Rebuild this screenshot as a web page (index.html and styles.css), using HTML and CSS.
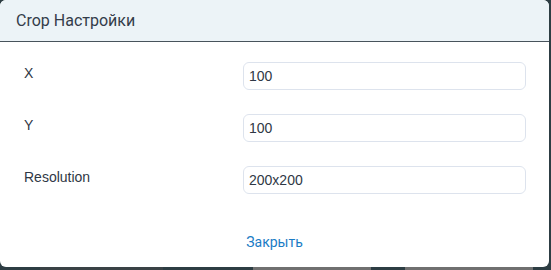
FILE: index.html
```html
<!DOCTYPE html>
<html lang="ru">

<head>
    <meta charset="UTF-8">
    <meta name="viewport" content="width=device-width, initial-scale=1.0">
    <title>Crop Настройки</title>
    <link rel="stylesheet" href="styles.css">
</head>

<body>
    <div class="modal">
        <div class="modal-header">Crop Настройки</div>
        <div class="modal-body">
            <div class="row">
                <label for="crop-x">X</label>
                <input id="crop-x" class="field" type="text" value="100">
            </div>
            <div class="row">
                <label for="crop-y">Y</label>
                <input id="crop-y" class="field" type="text" value="100">
            </div>
            <div class="row">
                <label for="crop-res">Resolution</label>
                <input id="crop-res" class="field" type="text" value="200x200">
            </div>
        </div>
        <div class="modal-footer">
            <a href="#" class="close">Закрыть</a>
        </div>
    </div>
</body>

</html>
```

FILE: styles.css
```css
html,
body {
    margin: 0;
    height: 100%;
}

body {
    font-family: "Liberation Sans", Arial, sans-serif;
    background-color: #2d3d43;
    /* what shows of the page under the dialog */
    background-image: linear-gradient(to right,
            #2d3d43 0, #2d3d43 40px, #3a4246 40px, #3a4246 163px,
            #2d3d43 163px, #2d3d43 253px, #707070 253px, #707070 371px,
            #2d3d43 371px, #2d3d43 405px, #707070 405px, #707070 533px,
            #2d3d43 533px);
    background-size: 100% 3px;
    background-position: 0 100%;
    background-repeat: no-repeat;
    overflow: hidden;
}

.modal {
    width: 549px;
    height: 267px;
    background: #fff;
    border-radius: 6px;
    overflow: hidden;
    display: flex;
    flex-direction: column;
}

.modal-header {
    height: 42px;
    box-sizing: border-box;
    padding: 0 16px;
    display: flex;
    align-items: center;
    background: #ecf3f7;
    border-bottom: 1px solid #48535c;
    font-family: Roboto, sans-serif;
    font-size: 16px;
    color: #333c4a;
}

.modal-body {
    padding: 20px 23px 0 24px;
    display: flex;
    flex-direction: column;
    gap: 24px;
}

.row {
    display: flex;
    align-items: center;
    height: 28px;
}

.row label {
    width: 219px;
    font-size: 14px;
    color: #2f3845;
    margin-top: -6px;
}

.field {
    flex: 1;
    height: 28px;
    box-sizing: border-box;
    border: 1px solid #dde3ed;
    border-radius: 6px;
    padding: 0 5px;
    font-family: "Liberation Sans", Arial, sans-serif;
    font-size: 14px;
    color: #2f3845;
    outline: none;
}

.modal-footer {
    margin-top: auto;
    padding-bottom: 16px;
    text-align: center;
}

.close {
    font-family: Roboto, sans-serif;
    font-size: 14px;
    color: #1b7cc5;
    text-decoration: none;
}
```
